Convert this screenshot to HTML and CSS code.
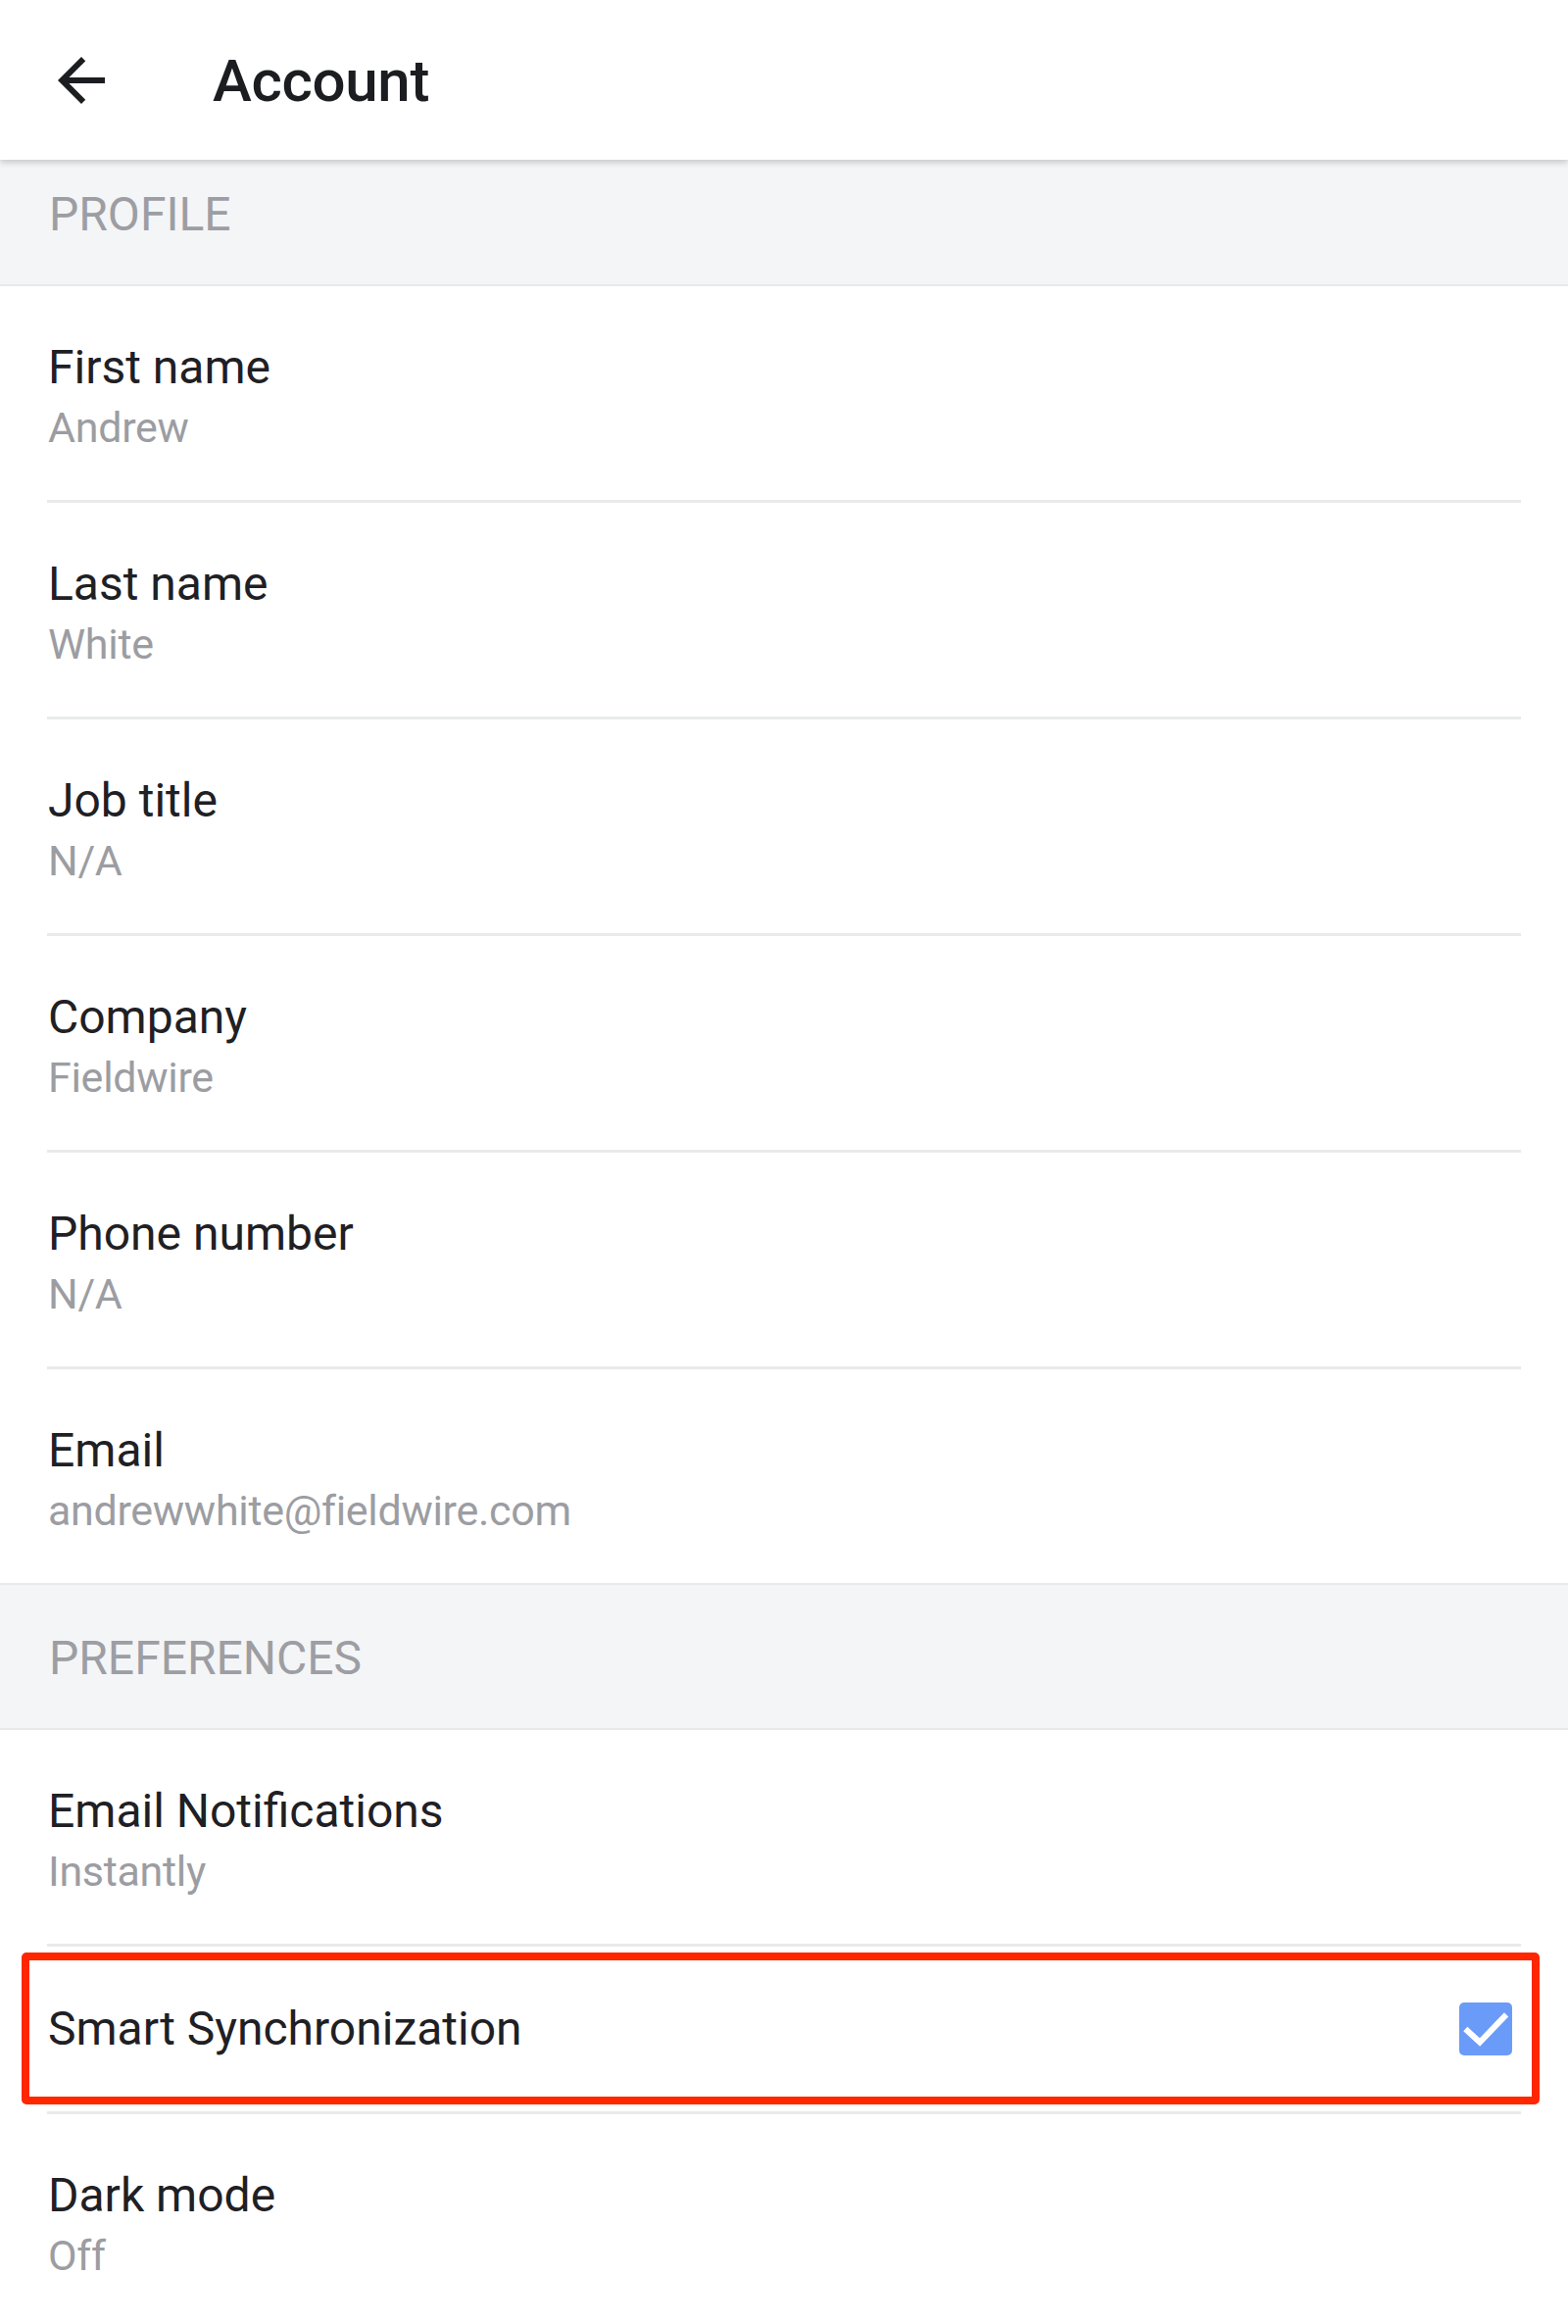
FILE: index.html
```html
<!DOCTYPE html>
<html lang="en">
<head>
<meta charset="utf-8">
<title>Account</title>
<link rel="stylesheet" href="styles.css">
</head>
<body>
<header class="appbar">
  <button class="appbar-back" aria-label="Back">
    <svg viewBox="0 0 24 24" width="72" height="72"><path d="M20 11H7.83l5.59-5.59L12 4l-8 8 8 8 1.41-1.41L7.83 13H20v-2z" fill="#1c1d21"/></svg>
  </button>
  <h1 class="appbar-title">Account</h1>
</header>
<main class="content">
  <div class="group-title group-title--first">PROFILE</div>
  <ul class="list">
    <li class="item"><div class="item-label">First name</div><div class="item-value">Andrew</div></li>
    <li class="item"><div class="item-label">Last name</div><div class="item-value">White</div></li>
    <li class="item"><div class="item-label">Job title</div><div class="item-value">N/A</div></li>
    <li class="item"><div class="item-label">Company</div><div class="item-value">Fieldwire</div></li>
    <li class="item"><div class="item-label">Phone number</div><div class="item-value">N/A</div></li>
    <li class="item item--last"><div class="item-label">Email</div><div class="item-value">andrewwhite@fieldwire.com</div></li>
  </ul>
  <div class="group-title">PREFERENCES</div>
  <ul class="list">
    <li class="item"><div class="item-label">Email Notifications</div><div class="item-value">Instantly</div></li>
    <li class="item item--toggle">
      <div class="item-label">Smart Synchronization</div>
      <span class="checkbox" aria-checked="true" role="checkbox">
        <svg viewBox="0 0 54 54" width="54" height="54"><path d="M8.5 29 L21 40.5 L46 14.5" fill="none" stroke="#fff" stroke-width="6" stroke-linecap="square" stroke-linejoin="miter"/></svg>
      </span>
      <span class="highlight"></span>
    </li>
    <li class="item item--last"><div class="item-label">Dark mode</div><div class="item-value">Off</div></li>
  </ul>
</main>
</body>
</html>
```
FILE: styles.css
```css
html, body {
  margin: 0;
  padding: 0;
  background: #ffffff;
}
body {
  font-family: Roboto, "Noto Sans", "Liberation Sans", sans-serif;
  color: #1f2024;
  overflow-x: hidden;
}
.appbar {
  position: relative;
  z-index: 2;
  height: 163px;
  display: flex;
  align-items: center;
  padding-left: 47px;
  background: #ffffff;
  box-shadow: 0 3px 6px rgba(0, 0, 0, 0.18);
}
.appbar-back {
  border: 0;
  background: none;
  padding: 0;
  width: 72px;
  height: 72px;
  margin-right: 98px;
  display: flex;
}
.appbar-title {
  margin: 0;
  font-size: 60px;
  line-height: 72px;
  font-weight: 500;
  color: #1c1d21;
  letter-spacing: -0.3px;
  padding-top: 2px;
}
.content {
  display: block;
}
.group-title {
  background: #f4f5f7;
  border-top: 2px solid #e8e9eb;
  border-bottom: 2px solid #e8e9eb;
  padding: 45px 0 41px 50px;
  font-size: 48px;
  line-height: 60px;
  color: #9d9ea3;
}
.group-title--first {
  border-top: 0;
  padding-top: 26px;
}
.list {
  list-style: none;
  margin: 0;
  padding: 0;
}
.item {
  margin: 0 48px;
  padding: 53px 0 45px 1px;
  border-bottom: 3px solid #e9eaeb;
}
.item--last {
  border-bottom: 0;
}
.item-label {
  font-size: 48px;
  line-height: 60px;
  color: #1f2024;
}
.item-value {
  font-size: 43px;
  line-height: 60px;
  letter-spacing: -0.3px;
  color: #9c9da2;
  padding-top: 1px;
  margin-bottom: -1px;
}
.item--toggle {
  position: relative;
  display: flex;
  align-items: center;
  justify-content: space-between;
  padding: 54px 9px 54px 1px;
}
.checkbox {
  width: 54px;
  height: 54px;
  border-radius: 5px;
  background: #6a9bf8;
  display: flex;
}
.highlight {
  position: absolute;
  left: -26px;
  right: -19px;
  top: 6px;
  bottom: 7px;
  border: 8px solid #ff2600;
  border-radius: 5px;
  pointer-events: none;
}
```
